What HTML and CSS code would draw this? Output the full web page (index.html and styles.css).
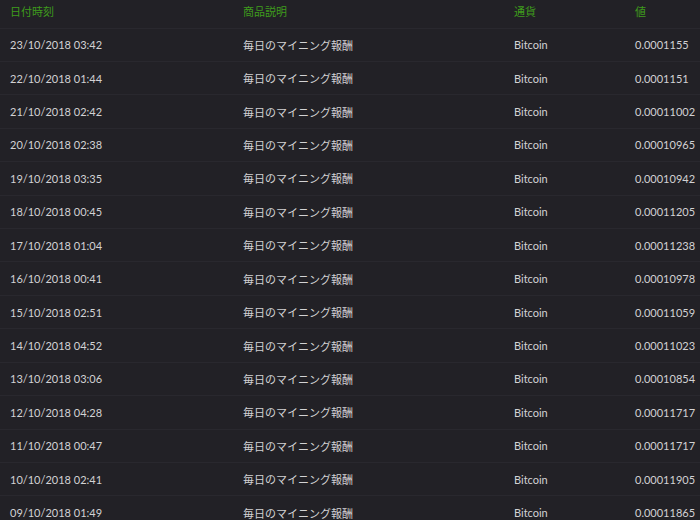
FILE: index.html
```html
<!DOCTYPE html>
<html lang="ja">
  <head>
    <meta charset="UTF-8" />
    <meta name="viewport" content="width=device-width, initial-scale=1.0" />
    <title>報酬履歴</title>
    <link rel="stylesheet" href="styles.css">
  </head>
  <body>
    <table class="history">
      <thead>
        <tr>
          <th class="col-date">日付時刻</th>
          <th class="col-desc">商品説明</th>
          <th class="col-cur">通貨</th>
          <th class="col-val">値</th>
        </tr>
      </thead>
      <tbody>
        <tr><td>23/10/2018 03:42</td><td>毎日のマイニング報酬</td><td>Bitcoin</td><td>0.0001155</td></tr>
        <tr><td>22/10/2018 01:44</td><td>毎日のマイニング報酬</td><td>Bitcoin</td><td>0.0001151</td></tr>
        <tr><td>21/10/2018 02:42</td><td>毎日のマイニング報酬</td><td>Bitcoin</td><td>0.00011002</td></tr>
        <tr><td>20/10/2018 02:38</td><td>毎日のマイニング報酬</td><td>Bitcoin</td><td>0.00010965</td></tr>
        <tr><td>19/10/2018 03:35</td><td>毎日のマイニング報酬</td><td>Bitcoin</td><td>0.00010942</td></tr>
        <tr><td>18/10/2018 00:45</td><td>毎日のマイニング報酬</td><td>Bitcoin</td><td>0.00011205</td></tr>
        <tr><td>17/10/2018 01:04</td><td>毎日のマイニング報酬</td><td>Bitcoin</td><td>0.00011238</td></tr>
        <tr><td>16/10/2018 00:41</td><td>毎日のマイニング報酬</td><td>Bitcoin</td><td>0.00010978</td></tr>
        <tr><td>15/10/2018 02:51</td><td>毎日のマイニング報酬</td><td>Bitcoin</td><td>0.00011059</td></tr>
        <tr><td>14/10/2018 04:52</td><td>毎日のマイニング報酬</td><td>Bitcoin</td><td>0.00011023</td></tr>
        <tr><td>13/10/2018 03:06</td><td>毎日のマイニング報酬</td><td>Bitcoin</td><td>0.00010854</td></tr>
        <tr><td>12/10/2018 04:28</td><td>毎日のマイニング報酬</td><td>Bitcoin</td><td>0.00011717</td></tr>
        <tr><td>11/10/2018 00:47</td><td>毎日のマイニング報酬</td><td>Bitcoin</td><td>0.00011717</td></tr>
        <tr><td>10/10/2018 02:41</td><td>毎日のマイニング報酬</td><td>Bitcoin</td><td>0.00011905</td></tr>
        <tr><td>09/10/2018 01:49</td><td>毎日のマイニング報酬</td><td>Bitcoin</td><td>0.00011865</td></tr>
      </tbody>
    </table>
  </body>
</html>
```

FILE: styles.css
```css
body {
  margin: 0;
  background-color: #222126;
  color: #d2d2d4;
  font-family: Lato, "Noto Sans CJK JP", sans-serif;
  font-size: 11px;
}
.history {
  width: 100%;
  border-collapse: collapse;
  table-layout: fixed;
}
.history th {
  height: 28px;
  padding: 3px 0 0 10px;
  box-sizing: border-box;
  vertical-align: top;
  text-align: left;
  font-weight: normal;
  color: #3f9c1c;
}
.col-date {
  width: 233px;
}
.col-desc {
  width: 271px;
}
.col-cur {
  width: 121px;
}
.history td {
  height: 32.43px;
  padding: 0 0 0 10px;
  border-top: 1px solid #29282e;
  vertical-align: middle;
  white-space: nowrap;
}
```
